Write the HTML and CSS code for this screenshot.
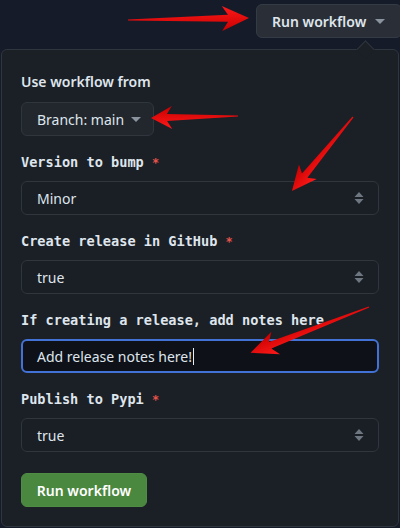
FILE: index.html
```html
<!DOCTYPE html>
<html>
<head>
<meta charset="utf-8">
<link rel="stylesheet" href="styles.css">
</head>
<body>
<div class="page">
  <div class="topbar">
    <button class="btn run-top">Run workflow <span class="caret"></span></button>
  </div>
  <div class="popup">
    <div class="title">Use workflow from</div>
    <button class="btn branch">Branch: main <span class="caret"></span></button>

    <div class="field">
      <label class="label">Version to bump <span class="req">*</span></label>
      <div class="select">Minor <svg class="updown" width="10" height="14" viewBox="0 0 10 14"><path d="M5 1 L9.5 6 H0.5 Z M5 13 L9.5 8 H0.5 Z" fill="#6e7681"/></svg></div>
    </div>

    <div class="field">
      <label class="label">Create release in GitHub <span class="req">*</span></label>
      <div class="select">true <svg class="updown" width="10" height="14" viewBox="0 0 10 14"><path d="M5 1 L9.5 6 H0.5 Z M5 13 L9.5 8 H0.5 Z" fill="#6e7681"/></svg></div>
    </div>

    <div class="field">
      <label class="label">If creating a release, add notes here</label>
      <div class="input">Add release notes here!<span class="cursor"></span></div>
    </div>

    <div class="field">
      <label class="label">Publish to Pypi <span class="req">*</span></label>
      <div class="select">true <svg class="updown" width="10" height="14" viewBox="0 0 10 14"><path d="M5 1 L9.5 6 H0.5 Z M5 13 L9.5 8 H0.5 Z" fill="#6e7681"/></svg></div>
    </div>

    <button class="btn primary">Run workflow</button>
  </div>

  <svg class="annot" width="400" height="528" viewBox="0 0 400 528">
    <defs>
      <linearGradient id="rg" x1="0" y1="0" x2="0" y2="1">
        <stop offset="0" stop-color="#ff1a1a"/>
        <stop offset="1" stop-color="#c80000"/>
      </linearGradient>
    </defs>
    <g fill="url(#rg)">
      <path transform="translate(128,20) rotate(-0.95)" d="M0,-0.6 L100,-3.5 L94,-12.5 L121,0 L94,12.5 L100,3.5 L0,0.6 Z"/>
      <path transform="translate(238,116) rotate(178.7)" d="M0,-0.6 L71,-3.5 L66,-11.5 L87,0 L66,11.5 L71,3.5 L0,0.6 Z"/>
      <path transform="translate(353,117) rotate(129.5)" d="M0,-0.6 L76,-3.5 L71,-11.5 L96,0 L71,11.5 L76,3.5 L0,0.6 Z"/>
      <path transform="translate(369,307) rotate(158.9)" d="M0,-0.6 L106,-3.5 L100,-12 L127,0 L100,12 L106,3.5 L0,0.6 Z"/>
    </g>
  </svg>
</div>
</body>
</html>
```

FILE: styles.css
```css
* { box-sizing: border-box; }
html, body {
  margin: 0;
  padding: 0;
  background: #161b2a;
  width: 400px;
  height: 528px;
  overflow: hidden;
}
.page {
  position: relative;
  width: 400px;
  height: 528px;
  font-family: "Segoe UI", "Noto Sans", "Open Sans", sans-serif;
  color: #e6edf3;
}
.topbar {
  height: 49px;
  display: flex;
  justify-content: flex-end;
  align-items: flex-start;
  padding-top: 4px;
}
.btn {
  font-family: "Noto Sans", "Open Sans", sans-serif;
  font-size: 14px;
  color: #dfe5ec;
  background: #2a2f37;
  border: 1px solid #353b44;
  border-radius: 6px;
  height: 34px;
  display: flex;
  align-items: center;
  cursor: pointer;
}
.run-top {
  width: 146px;
  margin-right: -2px;
  padding: 0 0 0 15px;
  font-weight: 600;
  gap: 9px;
}
.caret {
  display: inline-block;
  width: 0;
  height: 0;
  border-left: 5px solid transparent;
  border-right: 5px solid transparent;
  border-top: 5px solid #8b949e;
  margin-top: 1px;
}
.popup {
  position: relative;
  margin-left: 1px;
  width: 398px;
  height: 478px;
  background: #1b1f26;
  border: 1px solid #30363d;
  border-radius: 6px;
  padding: 22px 19px 0 19px;
  display: flex;
  flex-direction: column;
  align-items: flex-start;
}
.popup::before {
  content: "";
  position: absolute;
  top: -7px;
  left: 357px;
  width: 12px;
  height: 12px;
  background: #1b1f26;
  border-left: 1px solid #30363d;
  border-top: 1px solid #30363d;
  transform: rotate(45deg);
}
.title {
  font-size: 14px;
  font-weight: 600;
  line-height: 20px;
  color: #dfe5ec;
}
.branch {
  margin-top: 10px;
  width: 133px;
  background: #22272e;
  border-color: #30363d;
  padding: 0 0 0 15px;
  gap: 7px;
  font-weight: 400;
}
.field {
  width: 100%;
  margin-top: 16px;
  display: flex;
  flex-direction: column;
}
.label {
  display: block;
  height: 20px;
  font-family: "DejaVu Sans Mono", "Liberation Mono", monospace;
  font-weight: 700;
  font-size: 13.6px;
  line-height: 20px;
  color: #dfe5ec;
  margin-bottom: 9px;
}
.req {
  color: #e5534b;
  font-size: 12px;
  line-height: 1;
}
.select, .input {
  height: 34px;
  width: 100%;
  border: 1px solid #30363d;
  border-radius: 6px;
  background: #1a1e25;
  font-family: "Noto Sans", "Open Sans", sans-serif;
  font-size: 14px;
  color: #dfe5ec;
  display: flex;
  align-items: center;
  padding: 0 15px;
  position: relative;
}
.updown {
  margin-left: auto;
  margin-right: -1px;
}
.input {
  background: #0e1118;
  border: 2px solid #4272d6;
  padding-left: 14px;
}
.cursor {
  display: inline-block;
  width: 1px;
  height: 17px;
  background: #e6edf3;
  margin-left: 1px;
}
.primary {
  margin-top: 21px;
  width: 126px;
  background: #4a873f;
  border-color: #4f8d44;
  color: #ffffff;
  font-weight: 600;
  justify-content: center;
  padding: 0;
}
.annot {
  position: absolute;
  left: 0;
  top: 0;
  pointer-events: none;
}
```
